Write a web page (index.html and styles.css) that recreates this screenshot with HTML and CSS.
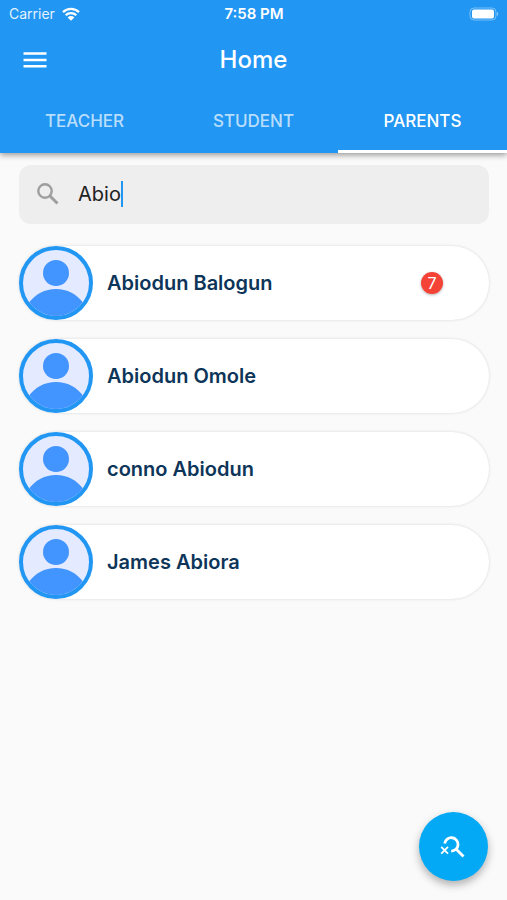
FILE: index.html
```html
<!DOCTYPE html>
<html lang="en">
<head>
  <meta charset="UTF-8">
  <meta name="viewport" content="width=device-width, initial-scale=1">
  <title>Home</title>
  <link rel="stylesheet" href="styles.css">
</head>

<body>

  <svg class="sprite" aria-hidden="true">
    <symbol id="person" viewBox="0 0 66 66">
      <circle cx="33" cy="23" r="13"/>
      <path d="M5 54C12 44 22 39 33 39s21 5 28 15v12H5z"/>
    </symbol>
  </svg>

  <header class="app-header">
    <div class="status-bar">
      <div class="carrier">
        <span>Carrier</span>
        <svg class="wifi" viewBox="0 0 18 14" aria-hidden="true">
          <path d="M1 5.2a11.5 11.5 0 0 1 16 0M3.7 8.2a7.6 7.6 0 0 1 10.6 0" fill="none" stroke="currentColor" stroke-width="2.3"/>
          <path d="M5.6 10.4a4.9 4.9 0 0 1 6.8 0L9 13.8z" fill="currentColor"/>
        </svg>
      </div>
      <span class="time">7:58 PM</span>
      <svg class="battery" viewBox="0 0 30 14" aria-hidden="true">
        <rect x="1" y="1" width="26" height="12" rx="4" fill="none" stroke="#fff" stroke-opacity=".4"/>
        <rect x="3" y="2.500" width="22" height="9" rx="2" fill="#fff"/>
        <path d="M28 5v4c1.600-.5 1.600-3.500 0-4z" fill="#fff" fill-opacity=".5"/>
      </svg>
    </div>

    <div class="app-bar">
      <button class="menu-btn" type="button" aria-label="Open menu">
        <svg viewBox="0 0 24 16" aria-hidden="true">
          <path d="M0.500 1.500h23M0.500 8h23M0.500 14.200h23" fill="none" stroke="currentColor" stroke-width="2.600"/>
        </svg>
      </button>
      <h1>Home</h1>
    </div>

    <nav class="tabs" role="tablist">
      <button class="tab" type="button" role="tab" aria-selected="false">TEACHER</button>
      <button class="tab" type="button" role="tab" aria-selected="false">STUDENT</button>
      <button class="tab active" type="button" role="tab" aria-selected="true">PARENTS</button>
    </nav>
  </header>

  <main>
    <label class="search">
      <svg class="search-icon" viewBox="0 0 22 22" aria-hidden="true">
        <circle cx="8" cy="8" r="6.700" fill="none" stroke="currentColor" stroke-width="2.400"/>
        <path d="M13 13l7.500 7.500" stroke="currentColor" stroke-width="3"/>
      </svg>
      <input type="text" value="Abio" aria-label="Search parents">
      <span class="caret"></span>
    </label>

    <ul class="people">
      <li class="person">
        <svg class="avatar" aria-hidden="true"><use href="#person"/></svg>
        <span class="name">Abiodun Balogun</span>
        <span class="badge">7</span>
      </li>
      <li class="person">
        <svg class="avatar" aria-hidden="true"><use href="#person"/></svg>
        <span class="name">Abiodun Omole</span>
      </li>
      <li class="person">
        <svg class="avatar" aria-hidden="true"><use href="#person"/></svg>
        <span class="name">conno Abiodun</span>
      </li>
      <li class="person">
        <svg class="avatar" aria-hidden="true"><use href="#person"/></svg>
        <span class="name">James Abiora</span>
      </li>
    </ul>
  </main>

  <button class="fab" type="button" aria-label="Clear search">
    <svg viewBox="0 0 28 24" aria-hidden="true">
      <path d="M4.700 8.500a6.700 6.700 0 1 1 6.500 7.600M15.500 13.500l8 8" fill="none" stroke="currentColor" stroke-width="2.800"/>
      <path d="M1.200 11.800l6.800 6.800M8 11.800l-6.800 6.800" stroke="currentColor" stroke-width="1.800"/>
    </svg>
  </button>

</body>
</html>
```

FILE: styles.css
```css
* {
  box-sizing: border-box;
}
body {
  margin: 0;
  min-height: 100vh;
  background-color: #fafafa;
  font-family: Inter, "Liberation Sans", sans-serif;
}
button {
  padding: 0;
  border: none;
  background: none;
  color: inherit;
  font: inherit;
  cursor: pointer;
}
.sprite {
  display: none;
}
.app-header {
  background-color: #2196f3;
  color: #fff;
  box-shadow: 0 2px 6px rgba(0,0,0,0.4);
}
.status-bar {
  display: grid;
  grid-template-columns: 1fr auto 1fr;
  align-items: center;
  height: 27px;
  padding: 0 8px 0 9px;
  font-size: 14px;
}
.carrier {
  display: flex;
  align-items: center;
  gap: 7px;
  color: #e3f2fd;
}
.wifi {
  width: 18px;
  height: 14px;
  color: #fff;
}
.time {
  font-size: 15px;
  font-weight: 600;
}
.battery {
  width: 30px;
  height: 14px;
  justify-self: end;
}
.app-bar {
  display: grid;
  grid-template-columns: 48px 1fr 48px;
  align-items: center;
  height: 65px;
  padding: 0 11px;
}
.menu-btn {
  display: flex;
  align-items: center;
  justify-content: center;
  height: 48px;
}
.menu-btn svg {
  width: 24px;
  height: 16px;
}
h1 {
  margin: 0;
  font-size: 24px;
  font-weight: 500;
  text-align: center;
}
.tabs {
  display: flex;
}
.tab {
  flex: 1;
  height: 61px;
  border-bottom: 3px solid transparent;
  color: rgba(255,255,255,0.7);
  font-size: 17px;
  font-weight: 500;
}
.tab.active {
  border-bottom-color: #fff;
  color: #fff;
}
main {
  padding: 12px 18px 100px 19px;
}
.search {
  display: flex;
  align-items: center;
  height: 59px;
  padding: 0 18px 2px;
  border-radius: 12px;
  background-color: #eee;
  cursor: text;
}
.search-icon {
  width: 22px;
  height: 22px;
  margin-right: 19px;
  color: #9e9e9e;
}
.search input {
  field-sizing: content;
  max-width: 80%;
  padding: 0;
  border: none;
  outline: none;
  background: none;
  color: #212121;
  font: inherit;
  font-size: 20px;
}
.caret {
  width: 2px;
  height: 26px;
  background-color: #2196f3;
}
.people {
  display: grid;
  gap: 19px;
  margin: 22px 0 0;
  padding: 0;
  list-style: none;
}
.person {
  display: flex;
  align-items: center;
  gap: 14px;
  padding-right: 46px;
  border-radius: 37px;
  background-color: #fff;
  box-shadow: 0 0 3px rgba(0,0,0,0.15);
}
.avatar {
  flex: none;
  width: 74px;
  height: 74px;
  border: 4px solid #2196f3;
  border-radius: 50%;
  background-color: #e4eaff;
  fill: #4294ff;
}
.name {
  flex: 1;
  color: #0d3559;
  font-size: 20px;
  font-weight: 600;
}
.badge {
  width: 22px;
  height: 22px;
  border-radius: 50%;
  background-color: #f44336;
  box-shadow: 0 1px 3px rgba(0,0,0,0.3);
  color: #fff;
  font-size: 16px;
  line-height: 22px;
  text-align: center;
}
/* floats above the list */
.fab {
  position: fixed;
  right: 19px;
  bottom: 19px;
  display: flex;
  align-items: center;
  justify-content: center;
  width: 69px;
  height: 69px;
  border-radius: 50%;
  background-color: #03a9f4;
  color: #fff;
  box-shadow: 0 4px 8px rgba(0,0,0,0.3);
}
.fab svg {
  width: 28px;
  height: 24px;
}
```
